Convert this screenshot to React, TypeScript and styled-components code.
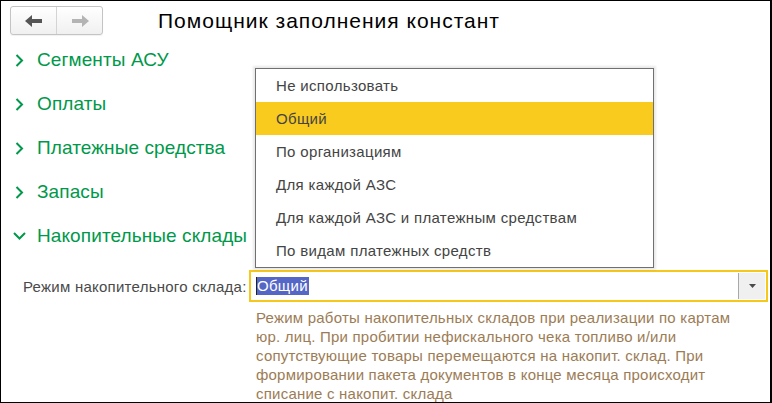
import React from "react";
import styled, { createGlobalStyle } from "styled-components";

const GlobalStyle = createGlobalStyle`
  html, body {
    margin: 0;
    padding: 0;
    background: #fff;
    font-family: "Liberation Sans", Arial, sans-serif;
  }
`;

const Frame = styled.div`
  width: 772px;
  height: 403px;
  box-sizing: border-box;
  border: 1px solid #000;
  border-right-width: 2px;
  background: #fff;
  overflow: hidden;
  display: flex;
  flex-direction: column;
`;

const Header = styled.div`
  display: flex;
  align-items: flex-start;
  height: 37px;
  flex-shrink: 0;
  padding: 5px 0 0 9px;
  box-sizing: border-box;
`;

const NavGroup = styled.div`
  display: flex;
  height: 29px;
  border: 1px solid #c4c4c4;
  border-radius: 3px;
  background: linear-gradient(#ffffff, #f0f0f0);
  box-sizing: border-box;
  box-shadow: 0 1px 1px rgba(0, 0, 0, 0.06);
`;

const NavButton = styled.div<{ $divider?: boolean }>`
  width: 45px;
  display: flex;
  align-items: center;
  justify-content: center;
  border-left: ${(p) => (p.$divider ? "1px solid #d4d4d4" : "none")};
`;

const Title = styled.div`
  margin-left: 55px;
  margin-top: 2px;
  font-size: 21px;
  line-height: 26px;
  letter-spacing: 1px;
  color: #000;
`;

const GroupList = styled.div`
  display: flex;
  flex-direction: column;
  flex-shrink: 0;
`;

const GroupRow = styled.div`
  height: 44px;
  display: flex;
  align-items: center;
  padding-left: 11px;
  color: #00984a;
  font-size: 19px;
  letter-spacing: 0.1px;
`;

const Chevron = styled.span`
  width: 15px;
  height: 14px;
  display: flex;
  align-items: center;
  justify-content: center;
  margin-right: 10px;
`;

const FieldRow = styled.div`
  display: flex;
  align-items: center;
  flex-shrink: 0;
  margin-top: 12px;
  padding-left: 22px;
  padding-right: 2px;
`;

const Label = styled.div`
  width: 226px;
  font-size: 15px;
  letter-spacing: 0.25px;
  color: #4a4a4a;
  white-space: nowrap;
`;

const InputWrap = styled.div`
  position: relative;
  flex: 1;
`;

const Input = styled.div`
  height: 32px;
  box-sizing: border-box;
  border: 2px solid #f7c81c;
  display: flex;
  align-items: center;
  padding: 0 1px 0 5px;
`;

const Selected = styled.span`
  border-left: 1px solid #222;
  background: #5466c6;
  color: #fff;
  font-size: 15px;
  line-height: 18px;
  letter-spacing: 0.3px;
  padding-right: 1px;
`;

const Spacer = styled.div`
  flex: 1;
`;

const DropButton = styled.div`
  width: 26px;
  height: 26px;
  background: #f0f0f0;
  border-left: 1px solid #a8a8a8;
  display: flex;
  align-items: center;
  justify-content: center;
`;

const Popup = styled.div`
  position: absolute;
  left: 6px;
  bottom: calc(100% + 2px);
  width: 399px;
  box-sizing: border-box;
  border: 1px solid #707070;
  background: #fff;
  box-shadow: 0 0 2px 2px rgba(0, 0, 0, 0.09);
  z-index: 10;
`;

const PopupItem = styled.div<{ $active?: boolean }>`
  height: 33px;
  display: flex;
  align-items: center;
  padding-left: 20px;
  font-size: 15px;
  letter-spacing: 0.33px;
  color: #444;
  background: ${(p) => (p.$active ? "#f9cb1f" : "transparent")};
`;

const Description = styled.div`
  width: 490px;
  margin: 6px 0 0 255px;
  font-size: 15px;
  line-height: 19px;
  letter-spacing: 0.22px;
  color: #9c7c55;
`;

const ArrowLeft = ({ color }: { color: string }) => (
  <svg width="18" height="12" viewBox="0 0 18 12">
    <path d="M0 6 L7 0 L7 4 L17 4 L17 8 L7 8 L7 12 Z" fill={color} />
  </svg>
);

const ArrowRight = ({ color }: { color: string }) => (
  <svg width="18" height="12" viewBox="0 0 18 12">
    <path d="M18 6 L11 0 L11 4 L1 4 L1 8 L11 8 L11 12 Z" fill={color} />
  </svg>
);

const ChevronRight = () => (
  <svg width="9" height="13" viewBox="0 0 9 13">
    <path d="M1.5 1 L7 6.5 L1.5 12" fill="none" stroke="#00984a" strokeWidth="2" />
  </svg>
);

const ChevronDown = () => (
  <svg width="13" height="8" viewBox="0 0 13 8">
    <path d="M1 1 L6.5 6.5 L12 1" fill="none" stroke="#00984a" strokeWidth="2" />
  </svg>
);

const groups = ["Сегменты АСУ", "Оплаты", "Платежные средства", "Запасы"];

const options = [
  "Не использовать",
  "Общий",
  "По организациям",
  "Для каждой АЗС",
  "Для каждой АЗС и платежным средствам",
  "По видам платежных средств",
];

export default function App() {
  return (
    <>
      <GlobalStyle />
      <Frame>
        <Header>
          <NavGroup>
            <NavButton>
              <ArrowLeft color="#555" />
            </NavButton>
            <NavButton $divider>
              <ArrowRight color="#b4b4b4" />
            </NavButton>
          </NavGroup>
          <Title>Помощник заполнения констант</Title>
        </Header>

        <GroupList>
          {groups.map((g) => (
            <GroupRow key={g}>
              <Chevron>
                <ChevronRight />
              </Chevron>
              {g}
            </GroupRow>
          ))}
          <GroupRow>
            <Chevron>
              <ChevronDown />
            </Chevron>
            Накопительные склады
          </GroupRow>
        </GroupList>

        <FieldRow>
          <Label>Режим накопительного склада:</Label>
          <InputWrap>
            <Popup>
              {options.map((o) => (
                <PopupItem key={o} $active={o === "Общий"}>
                  {o}
                </PopupItem>
              ))}
            </Popup>
            <Input>
              <Selected>Общий</Selected>
              <Spacer />
              <DropButton>
                <svg width="7" height="4" viewBox="0 0 7 4">
                  <path d="M0 0 L7 0 L3.5 4 Z" fill="#4a4a4a" />
                </svg>
              </DropButton>
            </Input>
          </InputWrap>
        </FieldRow>

        <Description>
          Режим работы накопительных складов при реализации по картам юр. лиц. При пробитии
          нефискального чека топливо и/или сопутствующие товары перемещаются на накопит. склад.
          При формировании пакета документов в конце месяца происходит списание с накопит. склада
        </Description>
      </Frame>
    </>
  );
}
